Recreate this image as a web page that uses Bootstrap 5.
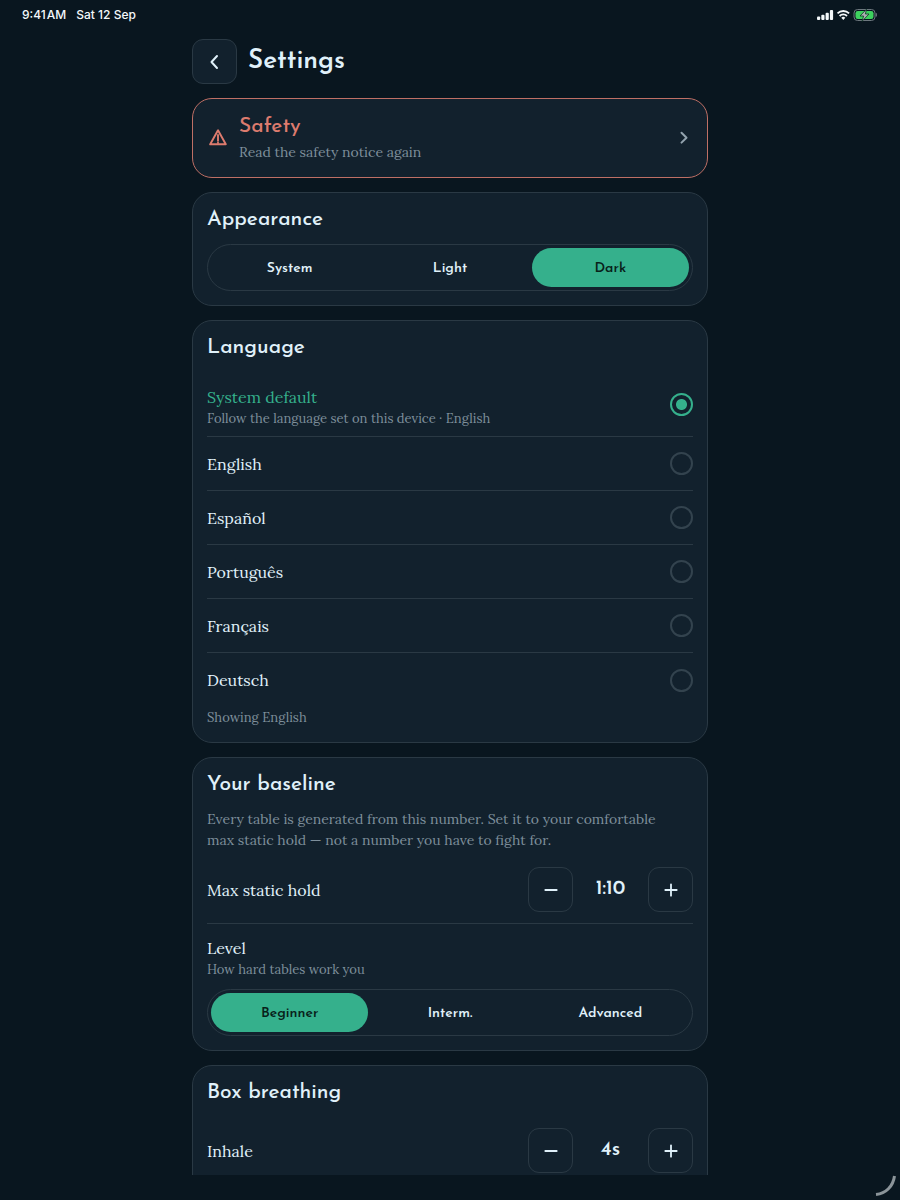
<!DOCTYPE html>
<html lang="en" data-bs-theme="dark">
<head>
<meta charset="utf-8">
<meta name="viewport" content="width=device-width, initial-scale=1">
<title>Settings</title>
<link href="https://cdn.jsdelivr.net/npm/bootstrap@5.3.0/dist/css/bootstrap.min.css" rel="stylesheet">
<script src="https://cdn.jsdelivr.net/npm/bootstrap@5.3.0/dist/js/bootstrap.bundle.min.js" defer></script>
<style>
  :root {
    --ink: #e0f1fa;
    --dim: #7e8f9b;
    --line: #2a3944;
    --panel: #12212d;
    --page: #09161f;
    --accent: #35b08c;
    --warn: #dd7b6e;
    --display: "Josefin Sans", Lato, sans-serif;
    --text: Lora, "Liberation Serif", serif;
  }
  body { background: var(--page); color: var(--ink); font-family: var(--text); font-size: 16px; line-height: 24px; }
  .status-bar { font: 500 12px/16px Inter, sans-serif; color: #f4f8fa; padding: 7px 23px 5px 22px; }
  .status-time { gap: 10px; }
  .column-wrap { width: 100%; max-width: 516px; }
  .scroller { overflow-y: auto; scrollbar-width: none; padding-top: 11px; margin-bottom: 25px; }
  .scroller::-webkit-scrollbar { display: none; }
  .stack { gap: 14px; }
  .square-btn { width: 45px; height: 45px; padding: 0; border: 1px solid var(--line); border-radius: 11px; color: var(--ink); display: flex; align-items: center; justify-content: center; }
  .square-btn:hover { border-color: var(--accent); color: var(--ink); }
  .back-btn { background: var(--panel); }
  h1, h2 { font-family: var(--display); margin: 0; color: var(--ink); }
  h1 { font-size: 26px; line-height: 45px; font-weight: 600; margin-left: 11px; }
  h2 { font-size: 21px; line-height: 26px; font-weight: 500; }
  .panel { background: var(--panel); border: 1px solid var(--line); border-radius: 20px; padding: 14px; }
  .panel-warn { border-color: #bf6f65; height: 80px; gap: 12px; }
  .panel-warn h2 { color: var(--warn); }
  .panel-warn .warn-icon { margin-left: 2px; flex: none; }
  .sub { color: var(--dim); font-size: 14px; line-height: 21px; }
  .panel-warn .sub { margin-top: 2px; }
  .note { color: var(--dim); font-size: 13px; line-height: 20px; }
  .segment { border: 1px solid var(--line); border-radius: 24px; padding: 3px; gap: 3px; }
  h2 + .segment, h2 + .step-row, h2 + .sub { margin-top: 11px; }
  .note + .segment { margin-top: 9px; }
  .segment .btn { flex: 1 1 0; height: 39px; padding: 0; border: 0; border-radius: 20px; color: var(--ink); font: 600 14px/41px var(--display); }
  .segment .btn-check:checked + .btn { background: var(--accent); color: #082019; }
  .choices { padding-top: 12px; margin-bottom: 1px; }
  .choice { height: 54px; border-bottom: 1px solid var(--line); cursor: pointer; }
  .choice-tall { height: 64px; }
  .choice:last-of-type { border-bottom: 0; }
  .choice .form-check-input { width: 23px; height: 23px; margin: 0; border: 2px solid #33434e; background: transparent; flex: none; }
  .choice .form-check-input:checked { border-color: var(--accent); background: radial-gradient(circle, var(--accent) 5px, transparent 6px); }
  .choice:has(:checked) .choice-name { color: var(--accent); }
  .step-row { height: 68px; border-bottom: 1px solid var(--line); }
  .sub + .step-row { margin-top: 5px; margin-bottom: 12px; }
  .step-value { width: 75px; text-align: center; font: 600 20px/24px var(--display); padding-bottom: 1px; }
</style>
</head>
<body class="vh-100 d-flex flex-column overflow-hidden">
  <header class="status-bar d-flex justify-content-between align-items-center">
    <div class="status-time d-flex"><span>9:41&#8202;AM</span><span>Sat 12 Sep</span></div>
    <svg width="60" height="14" viewBox="0 0 60 14" role="img" aria-label="Signal, Wi-Fi, battery charging">
      <g fill="#f4f8fa">
        <rect x="0" y="8.500" width="3.200" height="3.500" rx="1"/><rect x="4.300" y="6.800" width="3.200" height="5.200" rx="1"/>
        <rect x="8.600" y="4.700" width="3.200" height="7.300" rx="1"/><rect x="12.900" y="2" width="3.200" height="10" rx="1"/>
      </g>
      <g fill="none" stroke="#f4f8fa" stroke-width="1.800">
        <path d="M20.500 5.400a8.200 8.200 0 0 1 11.600 0"/><path d="M22.600 8a5.200 5.200 0 0 1 7.400 0"/>
      </g>
      <path d="M24.300 9.800a2.900 2.900 0 0 1 4 0l-2 2.200z" fill="#f4f8fa"/>
      <rect x="37" y="1.500" width="21" height="11" rx="3.500" fill="none" stroke="#6d777e"/>
      <rect x="38.500" y="3" width="18" height="8" rx="2.300" fill="#3ed15f"/>
      <path d="M59.300 5.200v3.400" stroke="#6d777e" stroke-width="1.200"/>
      <path d="M49.500 1.200 43 8h3.600l-1.600 5.300L52 6h-3.600z" fill="#a9b0b0" stroke="#0f3a25" stroke-width=".8"/>
    </svg>
  </header>

  <main class="scroller flex-grow-1 d-flex justify-content-center">
    <div class="column-wrap">
      <div class="stack d-flex flex-column">
        <div class="d-flex">
          <button type="button" class="btn square-btn back-btn" aria-label="Back">
            <svg width="22" height="22" viewBox="0 0 22 22" fill="none" stroke="currentColor" stroke-width="2" stroke-linecap="round" stroke-linejoin="round" aria-hidden="true"><path d="M13 5 7.500 11l5.500 6"/></svg>
          </button>
          <h1>Settings</h1>
        </div>

        <a href="#safety" class="panel panel-warn d-flex align-items-center text-decoration-none">
          <svg class="warn-icon" width="18" height="18" viewBox="0 0 18 18" fill="none" stroke="#dd7b6e" stroke-width="1.900" stroke-linecap="round" stroke-linejoin="round" aria-hidden="true"><path d="M9 1.300 1.200 15.300h15.600z"/><path d="M9 6v5.700M9 13.800v.2"/></svg>
          <div class="flex-grow-1">
            <h2>Safety</h2>
            <div class="sub">Read the safety notice again</div>
          </div>
          <svg width="20" height="20" viewBox="0 0 20 20" fill="none" stroke="#93a3ae" stroke-width="2" stroke-linecap="round" stroke-linejoin="round" aria-hidden="true"><path d="m8.500 4.800 5 4.900-5 4.900"/></svg>
        </a>

        <section class="panel">
          <h2>Appearance</h2>
          <div class="segment d-flex" role="group" aria-label="Appearance">
            <input class="btn-check" type="radio" name="theme" id="theme-system"><label class="btn" for="theme-system">System</label>
            <input class="btn-check" type="radio" name="theme" id="theme-light"><label class="btn" for="theme-light">Light</label>
            <input class="btn-check" type="radio" name="theme" id="theme-dark" checked><label class="btn" for="theme-dark">Dark</label>
          </div>
        </section>

        <section class="panel">
          <h2>Language</h2>
          <div class="choices">
            <label class="choice choice-tall d-flex align-items-center justify-content-between" for="lang-system">
              <span class="pt-1"><span class="choice-name d-block">System default</span><span class="note d-block">Follow the language set on this device · English</span></span>
              <input class="form-check-input" type="radio" name="lang" id="lang-system" checked>
            </label>
            <label class="choice d-flex align-items-center justify-content-between" for="lang-en"><span class="choice-name">English</span><input class="form-check-input" type="radio" name="lang" id="lang-en"></label>
            <label class="choice d-flex align-items-center justify-content-between" for="lang-es"><span class="choice-name">Español</span><input class="form-check-input" type="radio" name="lang" id="lang-es"></label>
            <label class="choice d-flex align-items-center justify-content-between" for="lang-pt"><span class="choice-name">Português</span><input class="form-check-input" type="radio" name="lang" id="lang-pt"></label>
            <label class="choice d-flex align-items-center justify-content-between" for="lang-fr"><span class="choice-name">Français</span><input class="form-check-input" type="radio" name="lang" id="lang-fr"></label>
            <label class="choice d-flex align-items-center justify-content-between" for="lang-de"><span class="choice-name">Deutsch</span><input class="form-check-input" type="radio" name="lang" id="lang-de"></label>
          </div>
          <div class="note">Showing English</div>
        </section>

        <section class="panel">
          <h2>Your baseline</h2>
          <p class="sub mb-0 pe-3">Every table is generated from this number. Set it to your comfortable max static hold — not a number you have to fight for.</p>
          <div class="step-row d-flex align-items-center">
            <span class="flex-grow-1" id="hold-label">Max static hold</span>
            <button type="button" class="btn square-btn" aria-label="Decrease hold"><svg width="16" height="16" viewBox="0 0 16 16" stroke="currentColor" stroke-width="1.800" stroke-linecap="round" aria-hidden="true"><path d="M2.300 8h11.400"/></svg></button>
            <output class="step-value" aria-labelledby="hold-label">1:10</output>
            <button type="button" class="btn square-btn" aria-label="Increase hold"><svg width="16" height="16" viewBox="0 0 16 16" stroke="currentColor" stroke-width="1.800" stroke-linecap="round" aria-hidden="true"><path d="M2.300 8h11.400M8 2.300v11.400"/></svg></button>
          </div>
          <div>Level</div>
          <div class="note">How hard tables work you</div>
          <div class="segment d-flex" role="group" aria-label="Level">
            <input class="btn-check" type="radio" name="level" id="level-1" checked><label class="btn" for="level-1">Beginner</label>
            <input class="btn-check" type="radio" name="level" id="level-2"><label class="btn" for="level-2">Interm.</label>
            <input class="btn-check" type="radio" name="level" id="level-3"><label class="btn" for="level-3">Advanced</label>
          </div>
        </section>

        <section class="panel">
          <h2>Box breathing</h2>
          <div class="step-row d-flex align-items-center">
            <span class="flex-grow-1" id="inhale-label">Inhale</span>
            <button type="button" class="btn square-btn" aria-label="Decrease inhale"><svg width="16" height="16" viewBox="0 0 16 16" stroke="currentColor" stroke-width="1.800" stroke-linecap="round" aria-hidden="true"><path d="M2.300 8h11.400"/></svg></button>
            <output class="step-value" aria-labelledby="inhale-label">4s</output>
            <button type="button" class="btn square-btn" aria-label="Increase inhale"><svg width="16" height="16" viewBox="0 0 16 16" stroke="currentColor" stroke-width="1.800" stroke-linecap="round" aria-hidden="true"><path d="M2.300 8h11.400M8 2.300v11.400"/></svg></button>
          </div>
        </section>
      </div>
    </div>
  </main>

  <svg class="position-fixed bottom-0 end-0" width="26" height="26" viewBox="0 0 26 26" fill="none" stroke="#8b9499" stroke-width="3" aria-hidden="true"><path d="M20.500 2C19 12.500 12 19.500 2 20.500"/></svg>
</body>
</html>
